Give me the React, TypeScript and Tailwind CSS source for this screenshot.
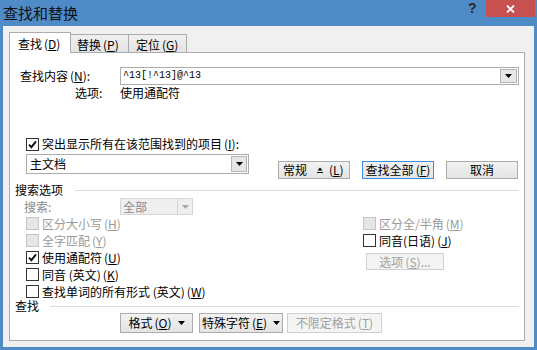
import React from "react";

const K = ({ c }: { c: string }) => (
  <span className="ml-[2px]">
    (<span className="underline decoration-1 underline-offset-[1px]">{c}</span>)
  </span>
);

function Box({ checked, disabled }: { checked?: boolean; disabled?: boolean }) {
  return (
    <span
      className={
        disabled
          ? "w-[13px] h-[13px] shrink-0 border border-[#c4c4c4] bg-[#e6e6e6] flex items-center justify-center"
          : "w-[13px] h-[13px] shrink-0 border border-[#333333] bg-white flex items-center justify-center"
      }
    >
      {checked && (
        <svg width="9" height="9" viewBox="0 0 9 9">
          <path d="M1 4.6 L3.4 7.2 L8 1.4" fill="none" stroke="#111" strokeWidth="1.9" />
        </svg>
      )}
    </span>
  );
}

const Arrow = ({ color = "#000" }: { color?: string }) => (
  <svg width="7" height="4" viewBox="0 0 7 4">
    <path d="M0 0 H7 L3.5 4 Z" fill={color} />
  </svg>
);

function Check({
  label,
  checked,
  disabled,
}: {
  label: React.ReactNode;
  checked?: boolean;
  disabled?: boolean;
}) {
  return (
    <div className="h-[17px] flex items-center gap-[3px]">
      <Box checked={checked} disabled={disabled} />
      <span className={disabled ? "text-[#9a9a9a] whitespace-nowrap" : "text-black whitespace-nowrap"}>{label}</span>
    </div>
  );
}

const btn =
  "h-[18px] border border-[#acacac] bg-gradient-to-b from-[#f2f2f2] to-[#e4e4e4] flex items-center justify-center leading-[16px]";

export default function App() {
  return (
    <div className="w-[537px] h-[350px] bg-[#4f8bc7] flex flex-col overflow-hidden font-['Noto_Sans_CJK_SC',sans-serif] text-[12px] text-black">
      {/* title bar */}
      <div className="h-[26px] flex shrink-0">
        <div className="pl-[3px] pt-[3px] text-[15px] leading-[20px] text-[#111]">查找和替换</div>
        <div className="flex-1" />
        <div className="w-[18px] h-[16px] text-[14px] font-bold leading-[16px] text-[#2a2a2a] font-['Liberation_Sans',sans-serif]">?</div>
        <div className="w-[49px] h-[17px] bg-[#c75050] flex items-center justify-center mr-[2px]">
          <svg width="9" height="8" viewBox="0 0 9 8">
            <path d="M1 0.5 L8 7.5 M8 0.5 L1 7.5" stroke="#fff" strokeWidth="1.8" />
          </svg>
        </div>
      </div>

      {/* body */}
      <div className="mx-[3px] mb-[3px] flex-1 bg-[#f0f0f0] pt-[6px] pl-[6px] pr-[9px] pb-[6px] flex flex-col">
        {/* tabs */}
        <div className="h-[21px] flex items-end shrink-0">
          <div className="relative z-10 w-[62px] h-[21px] border-l border-t border-r border-[#acacac] bg-white pl-[8px] pt-[3px] leading-[16px] whitespace-nowrap">
            查找<K c="D" />
          </div>
          <div className="w-[58px] h-[19px] border-t border-r border-[#acacac] bg-gradient-to-b from-[#f0f0f0] to-[#e3e3e3] pl-[6px] pt-[2px] leading-[16px] whitespace-nowrap">
            替换<K c="P" />
          </div>
          <div className="w-[58px] h-[19px] border-t border-r border-[#acacac] bg-gradient-to-b from-[#f0f0f0] to-[#e3e3e3] pl-[7px] pt-[2px] leading-[16px] whitespace-nowrap">
            定位<K c="G" />
          </div>
        </div>

        {/* panel */}
        <div className="-mt-[1px] flex-1 border border-[#acacac] bg-white flex flex-col">
          {/* find what */}
          <div className="mt-[14px] h-[18px] flex items-center">
            <div className="pl-[10px] w-[110px] leading-[16px] whitespace-nowrap">
              查找内容<K c="N" />:
            </div>
            <div className="w-[399px] h-[18px] border border-[#acacac] flex items-stretch">
              <div className="flex-1 pl-[2px] font-['Liberation_Mono',monospace] text-[10px] leading-[16px]">^13[!^13]@^13</div>
              <div className="w-[17px] my-[1px] mr-[1px] border border-[#b5b5b5] bg-[#e6e6e6] flex items-center justify-center">
                <Arrow />
              </div>
            </div>
          </div>
          <div className="h-[16px] flex items-center pl-[65px] leading-[16px]">
            <span className="w-[45px]">选项:</span>
            <span>使用通配符</span>
          </div>

          {/* highlight */}
          <div className="mt-[35px] h-[16px] flex items-center pl-[16px] gap-[3px]">
            <Box checked />
            <span className="leading-[16px] whitespace-nowrap">
              突出显示所有在该范围找到的项目<K c="I" />:
            </span>
          </div>
          <div className="mt-[2px] h-[25px] flex items-start">
            <div className="ml-[16px] w-[223px] h-[20px] border border-[#acacac] flex items-stretch">
              <div className="flex-1 pl-[3px] leading-[18px]">主文档</div>
              <div className="w-[16px] my-[1px] mr-[1px] border border-[#b5b5b5] bg-[#e6e6e6] flex items-center justify-center">
                <Arrow />
              </div>
            </div>
            <div className="ml-[29px] mt-[7px] flex gap-[12px]">
              <div className={btn + " w-[72px] justify-start pl-[4px] whitespace-nowrap"}>
                常规
                <svg width="6" height="6" viewBox="0 0 6 6" className="ml-[10px] mr-[6px]">
                  <path d="M0.5 3.5 L3 0.5 L5.5 3.5 Z" fill="#000" />
                  <rect x="0" y="5" width="6" height="1" fill="#000" />
                </svg>
                <span>
                  (<span className="underline decoration-1 underline-offset-[1px]">L</span>)
                </span>
              </div>
              <div className="w-[72px] h-[18px] border border-[#3d8ee0] bg-gradient-to-b from-[#f2f2f2] to-[#e4e4e4] flex items-center justify-center leading-[16px] whitespace-nowrap">
                查找全部<K c="F" />
              </div>
              <div className={btn + " w-[72px]"}>取消</div>
            </div>
          </div>

          {/* search options heading */}
          <div className="mt-[4px] h-[14px] flex items-center pl-[5px] pr-[5px]">
            <span className="leading-[14px] whitespace-nowrap">搜索选项</span>
            <div className="ml-[12px] flex-1 h-px bg-[#d5dfe5]" />
          </div>
          <div className="mt-[1px] h-[17px] flex items-center">
            <div className="pl-[14px] w-[110px] text-[#8a8a8a] leading-[16px]">搜索:</div>
            <div className="w-[73px] h-[17px] border border-[#d6d6d6] bg-[#efefef] flex items-stretch">
              <div className="flex-1 pl-[2px] text-[#8a8a8a] leading-[15px]">全部</div>
              <div className="w-[15px] border-l border-[#d6d6d6] flex items-center justify-center">
                <Arrow color="#a8a8a8" />
              </div>
            </div>
          </div>

          {/* checkbox columns */}
          <div className="flex">
            <div className="w-[353px] pl-[16px] flex flex-col">
              <Check disabled label={<>区分大小写<K c="H" /></>} />
              <Check disabled label={<>全字匹配<K c="Y" /></>} />
              <Check checked label={<>使用通配符<K c="U" /></>} />
              <Check label={<>同音 (英文)<K c="K" /></>} />
              <Check label={<>查找单词的所有形式 (英文)<K c="W" /></>} />
            </div>
            <div className="flex flex-col">
              <Check disabled label={<>区分全/半角<K c="M" /></>} />
              <Check label={<>同音(日语)<K c="J" /></>} />
              <div className="mt-[4px] ml-[3px] w-[78px] h-[17px] border border-[#d0d0d0] bg-[#f4f4f4] text-[#a0a0a0] flex items-center justify-center leading-[15px] whitespace-nowrap">
                选项<K c="S" />...
              </div>
            </div>
          </div>

          {/* find heading */}
          <div className="h-[12px] flex items-center pl-[5px] pr-[5px]">
            <span className="leading-[12px]">查找</span>
            <div className="ml-[11px] flex-1 h-px bg-[#d5dfe5]" />
          </div>
          <div className="mt-[1px] flex pl-[110px]">
            <div className={btn + " h-[20px] w-[73px] whitespace-nowrap"}>
              格式<K c="O" />
              <span className="ml-[6px] flex">
                <Arrow />
              </span>
            </div>
            <div className={btn + " h-[20px] ml-[6px] w-[84px] whitespace-nowrap"}>
              特殊字符<K c="E" />
              <span className="ml-[6px] flex">
                <Arrow />
              </span>
            </div>
            <div className="ml-[4px] w-[95px] h-[20px] border border-[#d0d0d0] bg-[#f4f4f4] text-[#a0a0a0] flex items-center justify-center leading-[16px] whitespace-nowrap">
              不限定格式<K c="T" />
            </div>
          </div>
        </div>
      </div>
    </div>
  );
}
